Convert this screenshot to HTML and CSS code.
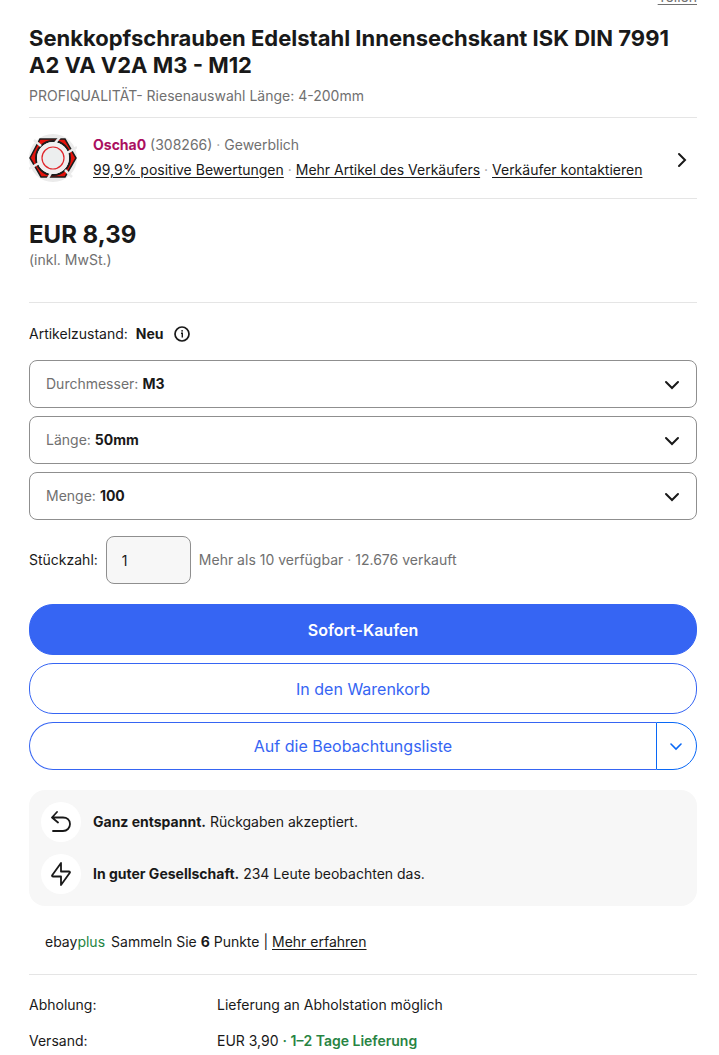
FILE: index.html
```html
<!DOCTYPE html>
<html lang="de">
<head>
  <meta charset="UTF-8">
  <meta name="viewport" content="width=device-width, initial-scale=1.0">
  <title>Senkkopfschrauben Edelstahl Innensechskant</title>
  <link rel="stylesheet" href="styles.css">
</head>
<body>

<main class="item">
  <div class="share">
    <a href="#">Teilen</a>
  </div>

  <header class="item-header">
    <h1>Senkkopfschrauben Edelstahl Innensechskant ISK DIN 7991 A2 VA V2A M3 - M12</h1>
    <p class="muted">PROFIQUALITÄT- Riesenauswahl Länge: 4-200mm</p>
  </header>

  <section class="seller">
    <svg class="seller-logo" viewBox="0 0 48 48" aria-hidden="true">
      <circle cx="24" cy="24" r="24" fill="#ebebeb"/>
      <path d="M11 5H36L47 24L36 43H12L1 24Z" fill="#e3120b" stroke="#1c1c1c" stroke-width="1.5"/>
      <circle cx="24" cy="24" r="17" fill="#ececec" stroke="#1c1c1c" stroke-width="2"/>
      <path d="M26 9L31 3M38 19L48 13M36 36L43 43M22 39L18 46M10 29L0 35M12 12L5 6" stroke="#ececec" stroke-width="2.5"/>
      <circle cx="24" cy="24" r="16" fill="#f0f0f0"/>
      <circle cx="24" cy="24" r="11" fill="#eceeee" stroke="#e0262b" stroke-width="1.2"/>
    </svg>
    <div class="seller-info">
      <p class="muted"><a class="seller-name" href="#">Oscha0</a> (308266) <span class="dot">·</span> Gewerblich</p>
      <p class="seller-links">
        <a href="#">99,9% positive Bewertungen</a>
        <span class="dot">·</span>
        <a href="#">Mehr Artikel des Verkäufers</a>
        <span class="dot">·</span>
        <a href="#">Verkäufer kontaktieren</a>
      </p>
    </div>
    <button class="seller-more" type="button" aria-label="Mehr zum Verkäufer">
      <svg width="10" height="16" viewBox="0 0 10 16"><path d="M2 2L8 8L2 14" fill="none" stroke="currentColor" stroke-width="2" stroke-linecap="round"/></svg>
    </button>
  </section>

  <section class="price">
    <p class="price-value">EUR 8,39</p>
    <p class="muted">(inkl. MwSt.)</p>
  </section>

  <form class="buy-form">
    <div class="condition">
      <span>Artikelzustand:</span>
      <strong>Neu</strong>
      <button class="info" type="button" aria-label="Info zum Artikelzustand">
        <svg width="16" height="16" viewBox="0 0 16 16"><circle cx="8" cy="8" r="7" fill="none" stroke="currentColor" stroke-width="1.7"/><path d="M7 7.300H8.300V11.500" fill="none" stroke="currentColor" stroke-width="1.4"/><circle cx="8.100" cy="4.800" r="0.900" fill="currentColor"/></svg>
      </button>
    </div>

    <div class="options">
      <div class="select-box">
        <label for="durchmesser">Durchmesser:</label>
        <select id="durchmesser"><option>M3</option></select>
        <svg class="chevron" width="16" height="10" viewBox="0 0 16 10"><path d="M2 2L8 8L14 2" fill="none" stroke="currentColor" stroke-width="2" stroke-linecap="round"/></svg>
      </div>
      <div class="select-box">
        <label for="laenge">Länge:</label>
        <select id="laenge"><option>50mm</option></select>
        <svg class="chevron" width="16" height="10" viewBox="0 0 16 10"><path d="M2 2L8 8L14 2" fill="none" stroke="currentColor" stroke-width="2" stroke-linecap="round"/></svg>
      </div>
      <div class="select-box">
        <label for="menge">Menge:</label>
        <select id="menge"><option>100</option></select>
        <svg class="chevron" width="16" height="10" viewBox="0 0 16 10"><path d="M2 2L8 8L14 2" fill="none" stroke="currentColor" stroke-width="2" stroke-linecap="round"/></svg>
      </div>
    </div>

    <div class="quantity">
      <label for="stueckzahl">Stückzahl:</label>
      <input id="stueckzahl" type="text" value="1">
      <span class="muted">Mehr als 10 verfügbar <span class="dot">·</span> 12.676 verkauft</span>
    </div>

    <div class="actions">
      <button class="btn btn-primary" type="button">Sofort-Kaufen</button>
      <button class="btn" type="button">In den Warenkorb</button>
      <div class="watch">
        <button class="watch-add" type="button">Auf die Beobachtungsliste</button>
        <button class="watch-menu" type="button" aria-label="Weitere Listen">
          <svg width="14" height="8" viewBox="0 0 14 8"><path d="M2 1L7 6L12 1" fill="none" stroke="currentColor" stroke-width="1.6" stroke-linecap="round"/></svg>
        </button>
      </div>
    </div>
  </form>

  <ul class="signals">
    <li>
      <span class="signal-icon">
        <svg width="20" height="22" viewBox="0 0 20 22"><path d="M6 1L1 6.500L7 11.500M1 6.500H12C16 6.500 19 9 19 13C19 17 16 20 12 20H2" fill="none" stroke="currentColor" stroke-width="1.8" stroke-linecap="round" stroke-linejoin="round"/></svg>
      </span>
      <p><strong>Ganz entspannt.</strong> Rückgaben akzeptiert.</p>
    </li>
    <li>
      <span class="signal-icon">
        <svg width="20" height="24" viewBox="0 0 20 24"><path d="M10 1L1 13.500Q1 14.500 2 14.500H10V23L19 10.500Q19 9.500 18 9.500H10Z" fill="none" stroke="currentColor" stroke-width="1.8" stroke-linejoin="round"/></svg>
      </span>
      <p><strong>In guter Gesellschaft.</strong> 234 Leute beobachten das.</p>
    </li>
  </ul>

  <p class="plus">
    <span class="plus-logo">ebay<span>plus</span></span>
    <span>Sammeln Sie <strong>6</strong> Punkte | <a href="#">Mehr erfahren</a></span>
  </p>

  <dl class="shipping">
    <dt>Abholung:</dt>
    <dd>Lieferung an Abholstation möglich</dd>
    <dt>Versand:</dt>
    <dd>EUR 3,90 <strong class="fast">· 1–2 Tage Lieferung</strong></dd>
  </dl>
</main>

</body>
</html>
```
FILE: styles.css
```css
* {
  box-sizing: border-box;
}

body {
  margin: 0;
  font-family: Inter, sans-serif;
  font-size: 14px;
  line-height: 20px;
  color: #191919;
  background-color: #fff;
}

h1, p, ul, dl, dd {
  margin: 0;
  padding: 0;
}

a {
  color: inherit;
  text-underline-offset: 2px;
}

button, input, select {
  font: inherit;
  color: inherit;
}

button {
  cursor: pointer;
}

strong {
  font-weight: 700;
}

svg {
  display: block;
}

.item {
  padding: 0 22px 0 29px;
}

.muted {
  color: #707070;
}

.dot {
  color: #a0a0a0;
}

/* Only the lower edge of the link stays in view */
.share {
  margin-top: -13px;
  text-align: right;
  color: #707070;
}

/* Title */
.item-header {
  padding: 18px 0 11px;
  border-bottom: 1px solid #e5e5e5;
}

h1 {
  margin-bottom: 7px;
  font-size: 22px;
  line-height: 27px;
  font-weight: 700;
}

/* Seller */
.seller {
  display: flex;
  align-items: center;
  gap: 16px;
  height: 81px;
  border-bottom: 1px solid #e5e5e5;
}

.seller-logo {
  flex: none;
  width: 48px;
  height: 48px;
}

.seller-info {
  flex: 1;
  display: grid;
  gap: 5px;
  padding-bottom: 2px;
}

.seller-name {
  color: #aa0f5f;
  font-weight: 700;
  text-decoration: none;
}

.seller-more {
  padding: 12px 10px 8px;
  border: 0;
  background: none;
}

/* Price */
.price {
  height: 104px;
  padding-top: 20px;
  border-bottom: 1px solid #e5e5e5;
}

.price-value {
  font-size: 24px;
  line-height: 31px;
  font-weight: 700;
}

/* Options */
.condition {
  display: flex;
  align-items: center;
  gap: 8px;
  padding: 21px 0 16px;
}

.info {
  padding: 0 2px;
  border: 0;
  background: none;
}

.options {
  display: grid;
  gap: 8px;
}

.select-box {
  position: relative;
  display: flex;
  align-items: center;
  height: 48px;
  padding-left: 16px;
  border: 1px solid #8f8f8f;
  border-radius: 8px;
}

.select-box label {
  color: #707070;
}

.select-box select {
  flex: 1;
  height: 100%;
  padding: 0 40px 0 4px;
  border: 0;
  background: none;
  appearance: none;
  font-weight: 700;
}

.chevron {
  position: absolute;
  top: 19px;
  right: 16px;
  pointer-events: none;
}

.quantity {
  display: flex;
  align-items: center;
  gap: 8px;
  padding: 16px 0 20px;
}

.quantity input {
  width: 85px;
  height: 48px;
  padding: 0 15px;
  border: 1px solid #8f8f8f;
  border-radius: 8px;
  background-color: #f7f7f7;
}

/* Buttons */
.actions {
  display: grid;
  gap: 8px;
  font-size: 16px;
  color: #3665f3;
}

.btn {
  height: 51px;
  border: 1px solid #3665f3;
  border-radius: 24px;
  background-color: #fff;
}

.btn-primary {
  background-color: #3665f3;
  color: #fff;
  font-weight: 600;
}

.watch {
  display: flex;
  height: 48px;
}

.watch-add {
  flex: 1;
  padding: 0 0 0 20px;
  border: 1px solid #3665f3;
  border-right: 0;
  border-radius: 24px 0 0 24px;
  background-color: #fff;
}

.watch-menu {
  display: flex;
  align-items: center;
  justify-content: center;
  width: 41px;
  padding: 2px 2px 0 0;
  border: 1px solid #0968f6;
  border-radius: 0 24px 24px 0;
  background-color: #fff;
  color: #0968f6;
}

/* Signals */
.signals {
  display: grid;
  gap: 12px;
  margin-top: 20px;
  padding: 12px;
  border-radius: 16px;
  background-color: #f7f7f7;
  list-style: none;
}

.signals li {
  display: flex;
  align-items: center;
  gap: 12px;
}

.signal-icon {
  display: flex;
  align-items: center;
  justify-content: center;
  width: 40px;
  height: 40px;
  border-radius: 50%;
  background-color: #fff;
}

.plus {
  display: flex;
  gap: 6px;
  padding: 26px 16px 22px;
  border-bottom: 1px solid #e5e5e5;
}

.plus-logo span {
  color: #1e8442;
}

/* Shipping */
.shipping {
  display: grid;
  grid-template-columns: 188px 1fr;
  row-gap: 16px;
  padding-top: 20px;
}

.fast {
  color: #288443;
  font-weight: 600;
}
```
